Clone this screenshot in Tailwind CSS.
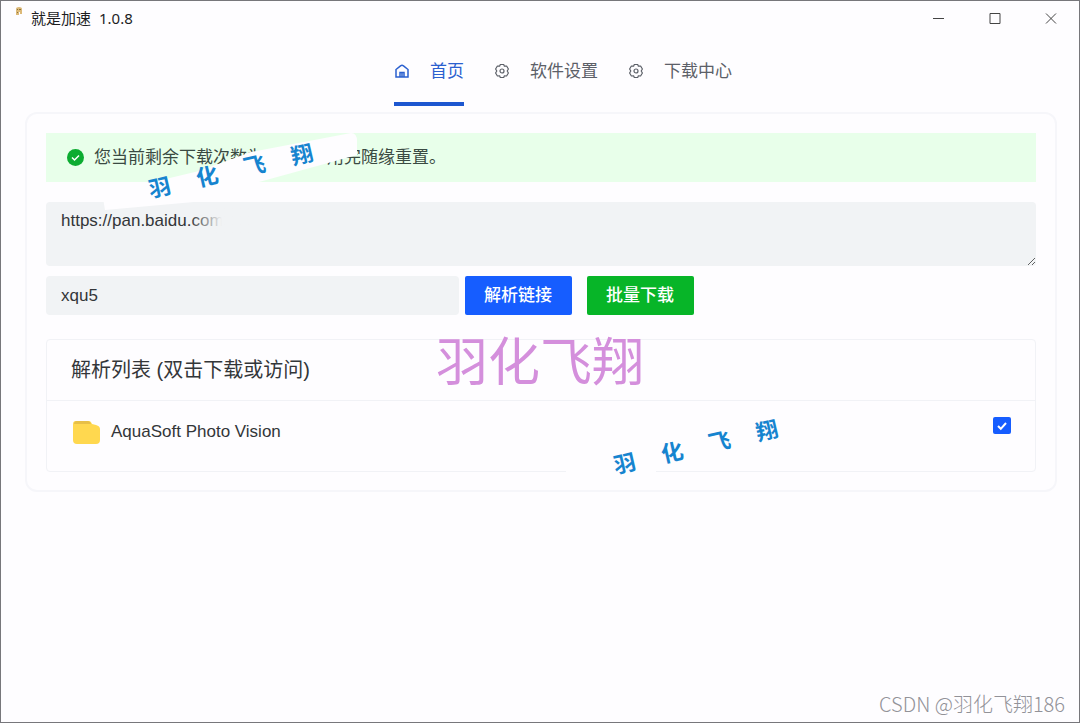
<!DOCTYPE html>
<html lang="zh-CN">
<head>
<meta charset="utf-8">
<meta name="viewport" content="width=device-width, initial-scale=1">
<title>就是加速 1.0.8</title>
<script src="https://cdn.jsdelivr.net/npm/@tailwindcss/browser@4"></script>
</head>
<body class="relative min-h-screen border border-[#77777b] bg-[#fefdff] font-['Liberation_Sans','Noto_Sans_CJK_SC',sans-serif] text-[17px] leading-6 text-[#333639]">

<header class="flex h-9 items-start justify-between pl-3.5">
  <div class="flex items-start gap-2">
    <svg class="mt-1.5 h-2 w-2" viewBox="0 0 8 8" aria-hidden="true"><path d="M1 2q0-2 3-2t3 2v5H5V5H4v3H1z" fill="#dcb978"/><path d="M2 2h1v1H2zM4 2h2v1H4zM2 5h1v1H2z" fill="#8e7338"/></svg>
    <h1 class="mt-1.5 flex gap-2 font-['Noto_Sans','Noto_Sans_CJK_SC',sans-serif] text-[15px] leading-[22px] text-[#1d1d1f]"><span>就是加速</span><span>1.0.8</span></h1>
  </div>
  <div class="flex text-[#444]">
    <button type="button" aria-label="最小化" class="grid h-[34px] w-14 place-items-center"><svg class="h-3 w-3" viewBox="0 0 12 12" fill="none" stroke="currentColor"><path d="M0 6.500h11"/></svg></button>
    <button type="button" aria-label="最大化" class="grid h-[34px] w-14 place-items-center"><svg class="h-3 w-3" viewBox="0 0 12 12" fill="none" stroke="currentColor"><path d="M1 1.500h10v10H1z"/></svg></button>
    <button type="button" aria-label="关闭" class="grid h-[34px] w-14 place-items-center"><svg class="h-3 w-3" viewBox="0 0 12 12" fill="none" stroke="currentColor"><path d="m1 1.500 10 10m0-10-10 10"/></svg></button>
  </div>
</header>

<nav class="flex h-[69px] justify-center gap-[30px] pl-[46px] text-[#5c6068]" aria-label="主导航">
  <a href="#home" aria-current="page" class="flex h-full items-start gap-5 border-b-4 border-[#1d57d0] pt-[23px] text-[#2b60cf]">
    <svg class="mt-[3px] h-4 w-4" viewBox="0 0 16 16" fill="none" stroke="currentColor" stroke-width="1.500"><path d="M2 14V6.500L6.500 2.800Q8 1.800 9.500 2.800L14 6.500V14zM6 14V9.500h4V14M8 10v4"/></svg>
    <span>首页</span>
  </a>
  <a href="#settings" class="flex items-start gap-5 pt-[23px]">
    <svg class="mt-[3px] h-4 w-4" viewBox="0 0 16 16" fill="none" stroke="currentColor" stroke-width="1.200" stroke-linejoin="round"><path d="M6.300 1.500h3.400l.7 1.700 2.200-.2 1.800 3-1.200 2 1.200 2-1.800 3-2.200-.2-.7 1.700H6.300l-.7-1.700-2.200.2-1.800-3 1.200-2-1.200-2 1.800-3 2.200.2z"/><circle cx="8" cy="8" r="2"/></svg>
    <span>软件设置</span>
  </a>
  <a href="#downloads" class="flex items-start gap-5 pt-[23px]">
    <svg class="mt-[3px] h-4 w-4" viewBox="0 0 16 16" fill="none" stroke="currentColor" stroke-width="1.200" stroke-linejoin="round"><path d="M6.300 1.500h3.400l.7 1.700 2.200-.2 1.800 3-1.200 2 1.200 2-1.800 3-2.200-.2-.7 1.700H6.300l-.7-1.700-2.200.2-1.800-3 1.200-2-1.200-2 1.800-3 2.200.2z"/><circle cx="8" cy="8" r="2"/></svg>
    <span>下载中心</span>
  </a>
</nav>

<main class="mr-[22px] ml-6 mt-1.5 rounded-xl border-2 border-[#f6f6fa] px-[19px] pt-[19px] pb-[18px]">
  <div role="status" class="flex h-[49px] items-center gap-2.5 bg-[#e8ffea] pl-[21px]">
    <svg class="h-[17px] w-[17px]" viewBox="0 0 17 17" aria-hidden="true"><circle cx="8.500" cy="8.500" r="8.500" fill="#0cac31"/><path d="m5 8.500 2.500 2.500L12 6.500" fill="none" stroke="#fff" stroke-width="1.500"/></svg>
    <p class="flex gap-[63px] text-[#3a4a42]"><span>您当前剩余下载次数为</span><span>用完随缘重置。</span></p>
  </div>

  <div class="relative mt-5 h-16">
    <textarea aria-label="分享链接" class="block h-16 w-full resize-y rounded-sm bg-[#f1f3f5] px-[15px] py-[7px] outline-none">https://pan.baidu.com/</textarea>
    <div class="pointer-events-none absolute top-1 left-[144px] h-8 w-20 bg-linear-to-r from-[#f1f3f5]/0 to-[#f1f3f5] to-40%"></div>
  </div>

  <div class="mt-2.5 flex">
    <input aria-label="提取码" type="text" value="xqu5" class="h-[39px] w-5/12 rounded-sm bg-[#f1f3f5] px-[15px] outline-none">
    <button type="button" class="ml-1.5 h-[39px] w-[107px] rounded-xs bg-[#165dff] font-medium text-white">解析链接</button>
    <button type="button" class="ml-[15px] h-[39px] w-[107px] rounded-xs bg-[#07b528] font-medium text-white">批量下载</button>
  </div>

  <section class="mt-6 rounded-sm border border-[#f1f2f6]">
    <h2 class="border-b border-[#f1f2f6] py-4 pl-6 text-[20px] leading-7">解析列表 (双击下载或访问)</h2>
    <div class="flex h-[70px] items-start justify-between pr-6 pl-[26px]">
      <label for="file" class="flex items-center gap-[11px] pt-[19px]">
        <svg class="h-6 w-[27px]" viewBox="0 0 27 24" aria-hidden="true"><path d="M3 1h13q2 0 3 3l4 1q4 1 4 4v11q0 4-4 4H4q-4 0-4-4V4q0-3 3-3" fill="#ffd84f"/><path d="M1 4q0-3 3-3h11q2 0 3 3z" fill="#e7bf47"/></svg>
        <span>AquaSoft Photo Vision</span>
      </label>
      <span class="mt-4 grid h-[17px] w-[18px]">
        <input id="file" type="checkbox" checked class="col-start-1 row-start-1 h-[17px] w-[18px] appearance-none rounded-xs bg-[#165dff]">
        <svg class="pointer-events-none col-start-1 row-start-1 h-[17px] w-[18px]" viewBox="0 0 18 17" fill="none" stroke="#fff" stroke-width="2" aria-hidden="true"><path d="m5 9 2.800 2.800L13 6"/></svg>
      </span>
    </div>
  </section>
</main>

<!-- Watermarks laid over the window -->
<svg class="pointer-events-none absolute top-[129px] left-[100px] h-20 w-[260px]" viewBox="0 0 260 80" aria-hidden="true"><path d="M2 68 48 53 98 41 150 22 250 3q6 0 6 8v14L158 52 126 69 4 80z" fill="#fefdff"/></svg>
<div class="pointer-events-none absolute top-[157px] left-[146px] flex w-[168px] -rotate-[13deg] justify-between text-[22px] leading-7 font-bold text-[#1684cf]" aria-hidden="true"><span>羽</span><span>化</span><span>飞</span><span>翔</span></div>
<div class="pointer-events-none absolute top-[461px] left-[565px] h-6 w-[90px] bg-[#fefdff]"></div>
<div class="pointer-events-none absolute top-[433px] left-[611px] flex w-[168px] -rotate-[13deg] justify-between text-[22px] leading-7 font-bold text-[#1684cf]" aria-hidden="true"><span>羽</span><span>化</span><span>飞</span><span>翔</span></div>
<div class="pointer-events-none absolute top-[330px] left-[435px] text-[52px] leading-[64px] text-[#d48fdc]">羽化飞翔</div>
<div class="pointer-events-none absolute right-3.5 bottom-1 font-['Noto_Sans_CJK_SC',sans-serif] text-[20px] leading-7 font-light text-[#929298]">CSDN @羽化飞翔186</div>
</body>
</html>
